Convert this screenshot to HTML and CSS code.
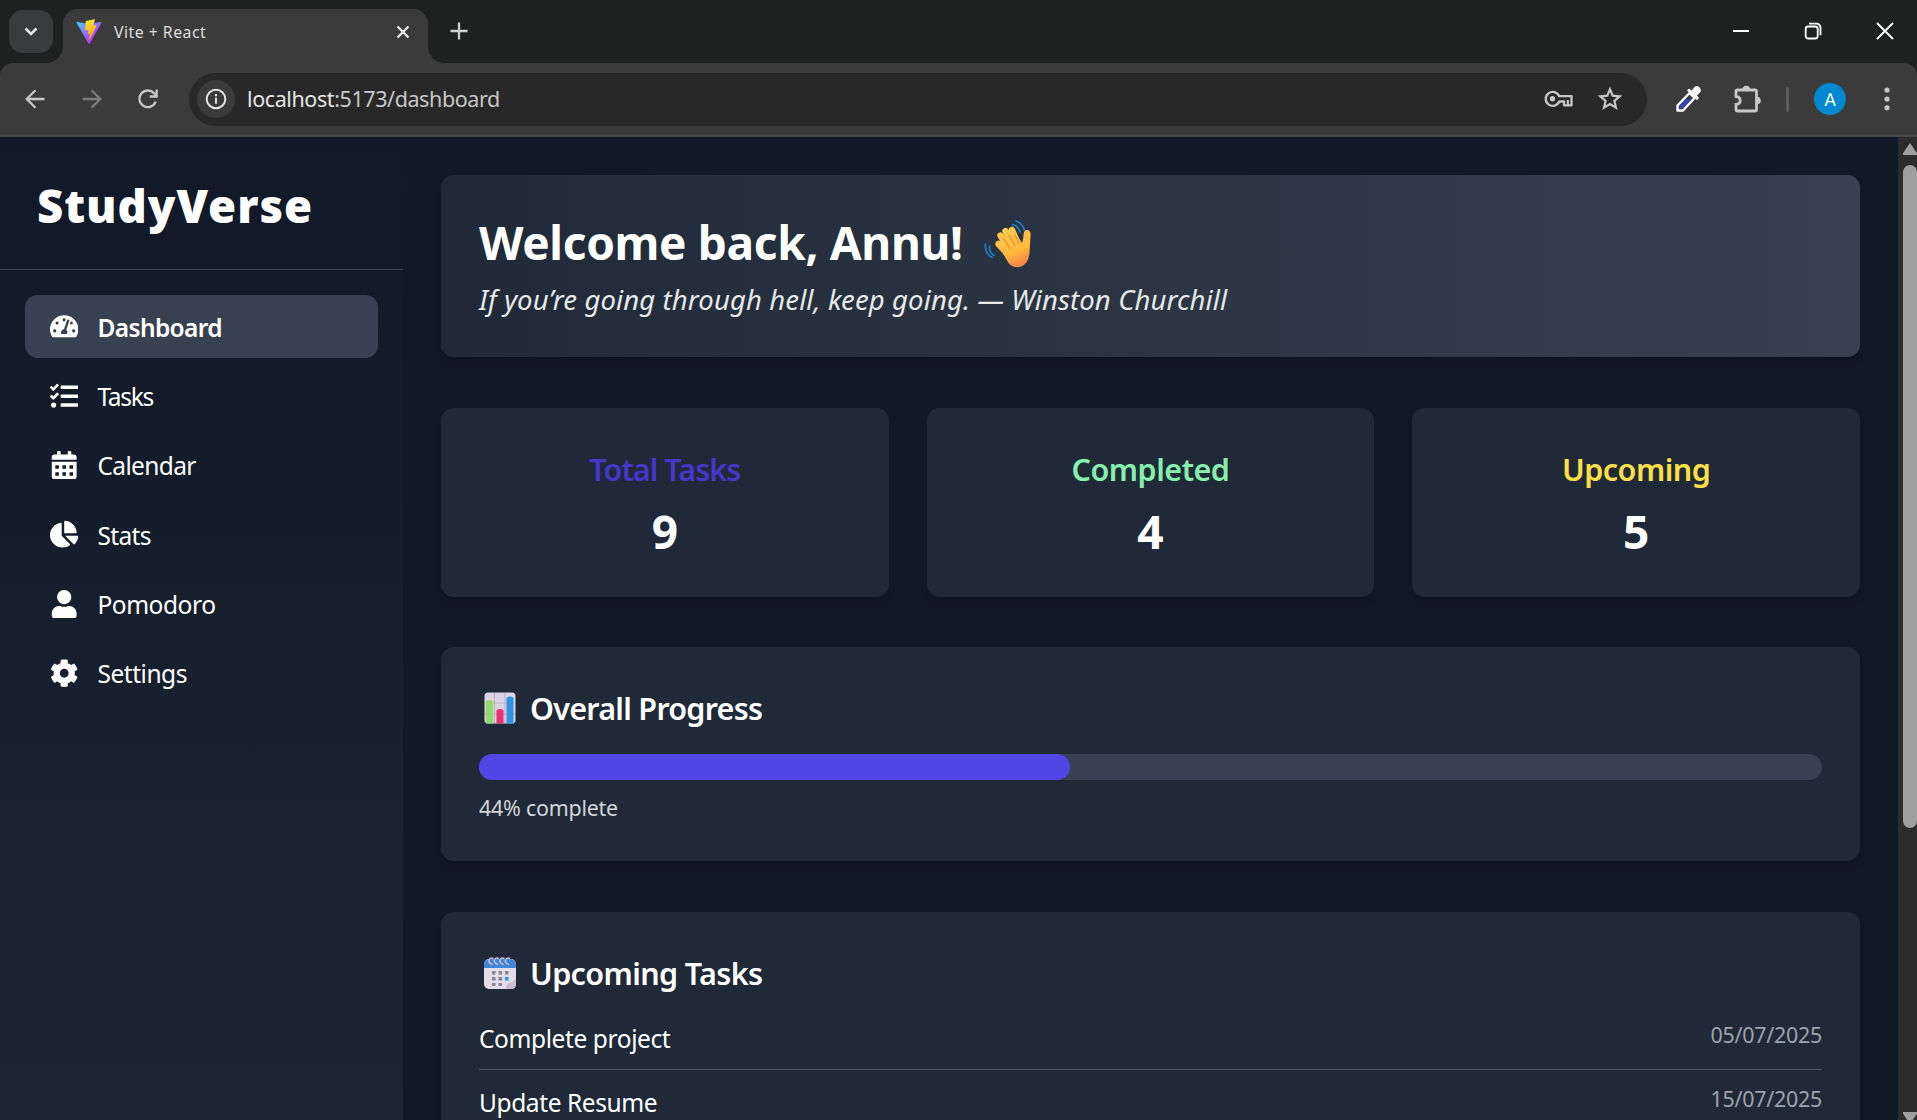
FILE: index.html
```html
<!DOCTYPE html>
<html lang="en">
<head>
<meta charset="utf-8">
<title>Vite + React</title>
<link rel="stylesheet" href="styles.css">
</head>
<body>
<div class="browser">
  <div class="tabstrip">
    <div class="tab-search"><svg width="14" height="10" viewBox="0 0 14 10"><path d="M1.5 1.5 7 7l5.500-5.500" fill="none" stroke="#e3e3e3" stroke-width="2.600"/></svg></div>
    <div class="tab">
      <svg class="favicon" width="26" height="26" viewBox="0 0 410 404">
        <defs>
          <linearGradient id="va" x1="6" y1="33" x2="235" y2="344" gradientUnits="userSpaceOnUse"><stop stop-color="#41d1ff"/><stop offset="1" stop-color="#bd34fe"/></linearGradient>
          <linearGradient id="vb" x1="194.600" y1="8.800" x2="236" y2="293" gradientUnits="userSpaceOnUse"><stop stop-color="#ffea83"/><stop offset=".083" stop-color="#ffdd35"/><stop offset="1" stop-color="#ffa800"/></linearGradient>
        </defs>
        <path fill="url(#va)" d="M399.641 59.5246L215.643 388.545C211.844 395.338 202.084 395.378 198.228 388.618L10.5817 59.5563C6.38087 52.1896 12.6802 43.2665 21.0281 44.7586L205.223 77.6824C206.398 77.8924 207.601 77.8904 208.776 77.6763L389.119 44.8058C397.439 43.2894 403.768 52.1434 399.641 59.5246Z"/>
        <path fill="url(#vb)" d="M292.965 1.5744L156.801 28.2552C154.563 28.6937 152.906 30.5903 152.771 32.8664L144.395 174.33C144.198 177.662 147.258 180.248 150.51 179.498L188.42 170.749C191.967 169.931 195.172 173.055 194.443 176.622L183.18 231.775C182.422 235.487 185.907 238.661 189.532 237.56L212.947 230.446C216.577 229.344 220.065 232.527 219.297 236.242L201.398 322.875C200.278 328.294 207.486 331.249 210.492 326.603L212.5 323.5L323.454 102.072C325.312 98.3645 322.108 94.137 318.036 94.9228L279.014 102.454C275.347 103.161 272.227 99.746 273.262 96.1583L298.731 7.86689C299.767 4.27314 296.636 0.855181 292.965 1.5744Z"/>
      </svg>
      <span class="tab-title">Vite + React</span>
      <svg class="tab-close" width="14" height="14" viewBox="0 0 14 14"><path d="M1.500 1.500l11 11M12.500 1.500l-11 11" stroke="#e8e8e8" stroke-width="2.300"/></svg>
    </div>
    <svg class="new-tab" width="18" height="18" viewBox="0 0 18 18"><path d="M9 .5v17M.5 9h17" stroke="#d0d0d0" stroke-width="2.300"/></svg>
    <div class="win-controls">
      <svg width="18" height="18" viewBox="0 0 18 18"><path d="M1 9h16" stroke="#fff" stroke-width="2"/></svg>
      <svg width="18" height="18" viewBox="0 0 18 18" fill="none" stroke="#fff" stroke-width="1.800"><rect x="1.700" y="4.500" width="12" height="12" rx="2.500"/><path d="M5 1.700h7.500a4 4 0 0 1 4 4v7.500"/></svg>
      <svg width="18" height="18" viewBox="0 0 18 18"><path d="M1 1l16 16M17 1L1 17" stroke="#fff" stroke-width="1.900"/></svg>
    </div>
  </div>
  <div class="toolbar">
    <svg class="nav-btn" width="20" height="20" viewBox="0 0 20 20" fill="none" stroke="#c7c7c7" stroke-width="2.300"><path d="M19.500 10H2M10.500 1.200 1.700 10l8.800 8.800"/></svg>
    <svg class="nav-btn" width="20" height="20" viewBox="0 0 20 20" fill="none" stroke="#7d7d7d" stroke-width="2.300"><path d="M.5 10H18M9.500 1.200 18.300 10l-8.800 8.800"/></svg>
    <svg class="nav-btn" width="20" height="20" viewBox="0 0 20 20" fill="none" stroke="#c7c7c7" stroke-width="2.300"><path d="M17.600 12.600A8.300 8.300 0 1 1 16 4.300l2 2.200M18.700.5v7h-7"/></svg>
    <div class="omnibox">
      <div class="site-info"><svg width="22" height="22" viewBox="0 0 22 22"><circle cx="11" cy="11" r="9.300" fill="none" stroke="#e3e3e3" stroke-width="2"/><path d="M11 9.800v6M11 6v2.200" stroke="#e3e3e3" stroke-width="2"/></svg></div>
      <span class="url"><b>localhost</b>:5173/dashboard</span>
      <svg class="key" width="30" height="18" viewBox="0 0 30 18" fill="none" stroke="#c7c7c7" stroke-width="2.300"><path d="M15.200 6.200A7 7 0 1 0 15.200 11.500H20v3.800h7.500V6.200z" stroke-linejoin="round"/><circle cx="8.500" cy="8.800" r="2.700" fill="#c7c7c7" stroke="none"/><path d="M23.800 10v5"/></svg>
      <svg class="star" width="26" height="26" viewBox="0 0 26 26" fill="none" stroke="#c7c7c7" stroke-width="2.200"><path d="M13 3.200l2.700 6.500 7 .6-5.300 4.600 1.600 6.900-6-3.700-6 3.700 1.600-6.900-5.300-4.600 7-.6z"/></svg>
    </div>
    <svg class="pipette" width="28" height="28" viewBox="0 0 28 28"><path d="M2.500 25.500v-5L14.500 8l5 5L8 25.500z" fill="#3b3b3b" stroke="#fff" stroke-width="2.400" stroke-linejoin="round"/><path d="M4.500 23.500v-2.500l6.500-6.800h5.500L7 23.500z" fill="#3346c8"/><path d="M12 5.500l2-2 2.500 2 3-3.500q2.500-2 5 .5t.5 5l-3 3 2 2.500-2 2.300z" fill="#fff"/></svg>
    <svg class="puzzle" width="28" height="28" viewBox="0 0 28 28"><path d="M4.500 5H22q1.500 0 1.500 1.500v18Q23.500 26 22 26H4.500Q3 26 3 24.500v-5q4.200-.5 4.200-4T3 11.500v-5Q3 5 4.500 5z" fill="none" stroke="#c7c7c7" stroke-width="2.800"/><path d="M9.500 4.500a3.800 3.800 0 0 1 7.600 0zM24 11.700a3.800 3.800 0 0 1 0 7.600z" fill="#c7c7c7"/></svg>
    <i class="divider"></i>
    <div class="avatar">A</div>
    <svg class="menu" width="6" height="24" viewBox="0 0 6 24" fill="#c7c7c7"><circle cx="3" cy="3" r="2.600"/><circle cx="3" cy="12" r="2.600"/><circle cx="3" cy="20.800" r="2.600"/></svg>
  </div>
</div>
<div class="page">
  <aside class="sidebar">
    <div class="brand">StudyVerse</div>
    <nav class="nav">
      <a class="nav-item active"><svg viewBox="0 0 576 512"><path d="M288 32C128.94 32 0 160.94 0 320c0 52.8 14.25 102.26 39.06 144.8 5.61 9.62 16.3 15.2 27.44 15.2h443c11.14 0 21.83-5.58 27.44-15.2C561.75 422.26 576 372.8 576 320c0-159.06-128.94-288-288-288zm0 64c14.71 0 26.58 10.13 30.32 23.65-1.11 2.26-2.64 4.23-3.45 6.67l-9.22 27.67c-5.13 3.49-10.97 6.01-17.64 6.01-17.67 0-32-14.33-32-32S270.33 96 288 96zM96 384c-17.67 0-32-14.33-32-32s14.33-32 32-32 32 14.33 32 32-14.33 32-32 32zm48-160c-17.67 0-32-14.33-32-32s14.33-32 32-32 32 14.33 32 32-14.33 32-32 32zm246.77-72.41l-61.33 184C343.13 347.33 352 364.54 352 384c0 11.72-3.38 22.55-8.88 32H232.88c-5.5-9.45-8.88-20.28-8.88-32 0-33.94 26.5-61.43 59.9-63.59l61.34-184.01c4.17-12.56 17.73-19.45 30.36-15.17 12.57 4.19 19.35 17.79 15.17 30.36zm14.66 57.2l15.52-46.55c3.47-1.29 7.13-2.23 11.05-2.23 17.67 0 32 14.33 32 32s-14.33 32-32 32c-11.38-.01-20.89-6.28-26.57-15.22zM480 384c-17.67 0-32-14.33-32-32s14.33-32 32-32 32 14.33 32 32-14.33 32-32 32z"/></svg><span class="label">Dashboard</span></a>
      <a class="nav-item nav-tasks"><svg viewBox="0 0 512 512"><path d="M139.61 35.5a12 12 0 0 0-17 0L58.93 98.81l-22.7-22.12a12 12 0 0 0-17 0L3.53 92.41a12 12 0 0 0 0 17l47.59 47.4a12.78 12.78 0 0 0 17.61 0l15.59-15.62L156.52 69a12.09 12.09 0 0 0 .09-17zm0 159.19a12 12 0 0 0-17 0l-63.68 63.72-22.7-22.1a12 12 0 0 0-17 0L3.53 252a12 12 0 0 0 0 17L51 316.5a12.77 12.77 0 0 0 17.6 0l15.7-15.69 72.2-72.22a12 12 0 0 0 .09-16.9zM64 368c-26.49 0-48.59 21.5-48.59 48S37.53 464 64 464a48 48 0 0 0 0-96zm432 16H208a16 16 0 0 0-16 16v32a16 16 0 0 0 16 16h288a16 16 0 0 0 16-16v-32a16 16 0 0 0-16-16zm0-320H208a16 16 0 0 0-16 16v32a16 16 0 0 0 16 16h288a16 16 0 0 0 16-16V80a16 16 0 0 0-16-16zm0 160H208a16 16 0 0 0-16 16v32a16 16 0 0 0 16 16h288a16 16 0 0 0 16-16v-32a16 16 0 0 0-16-16z"/></svg><span class="label">Tasks</span></a>
      <a class="nav-item"><svg viewBox="0 0 448 512"><path fill-rule="evenodd" d="M0 464c0 26.500 21.500 48 48 48h352c26.500 0 48-21.500 48-48V192H0zM64 256h64v64H64zM192 256h64v64h-64zM320 256h64v64h-64zM64 384h64v64H64zM192 384h64v64h-64zM320 384h64v64h-64zM400 64h-48V16c0-8.800-7.200-16-16-16h-32c-8.800 0-16 7.200-16 16v48H160V16c0-8.800-7.200-16-16-16h-32c-8.800 0-16 7.200-16 16v48H48C21.500 64 0 85.500 0 112v48h448v-48c0-26.500-21.500-48-48-48z"/></svg><span class="label">Calendar</span></a>
      <a class="nav-item"><svg viewBox="0 0 544 512"><path d="M527.79 288H290.5l158.03 158.03c6.04 6.04 15.98 6.53 22.19.68 38.7-36.46 65.32-85.61 73.13-140.86 1.34-9.46-6.51-17.85-16.06-17.85zm-15.83-64.8C503.72 103.74 408.26 8.28 288.8.04 279.68-.59 272 7.1 272 16.24V240h223.77c9.14 0 16.82-7.68 16.19-16.8zM224 288V50.71c0-9.55-8.39-17.4-17.84-16.06C86.99 51.49-4.1 155.6.14 280.37 4.5 408.51 114.83 513.59 243.03 511.98c50.4-.63 96.97-16.87 135.26-44.03 7.9-5.6 8.42-17.23 1.57-24.08L224 288z"/></svg><span class="label">Stats</span></a>
      <a class="nav-item nav-wide"><svg viewBox="0 0 448 512"><path d="M224 256c70.7 0 128-57.3 128-128S294.7 0 224 0 96 57.3 96 128s57.3 128 128 128zm89.6 32h-16.7c-22.2 10.2-46.9 16-72.9 16s-50.6-5.8-72.9-16h-16.7C60.2 288 0 348.2 0 422.4V464c0 26.5 21.5 48 48 48h352c26.5 0 48-21.5 48-48v-41.6c0-74.2-60.2-134.4-134.4-134.4z"/></svg><span class="label">Pomodoro</span></a>
      <a class="nav-item nav-wide"><svg viewBox="0 0 512 512"><path d="M487.4 315.7l-42.6-24.6c4.3-23.2 4.3-47 0-70.2l42.6-24.6c4.9-2.8 7.1-8.6 5.5-14-11.1-35.6-30-67.8-54.7-94.6-3.8-4.1-10-5.1-14.8-2.3L380.8 110c-17.9-15.4-38.5-27.3-60.8-35.1V25.8c0-5.6-3.9-10.5-9.4-11.7-36.7-8.2-74.3-7.8-109.2 0-5.5 1.2-9.4 6.1-9.4 11.7V75c-22.2 7.9-42.8 19.8-60.8 35.1L88.7 85.5c-4.9-2.8-11-1.9-14.8 2.3-24.7 26.7-43.6 58.9-54.7 94.6-1.7 5.4.6 11.2 5.5 14L67.3 221c-4.3 23.2-4.3 47 0 70.2l-42.6 24.6c-4.9 2.8-7.1 8.6-5.5 14 11.1 35.6 30 67.8 54.7 94.6 3.8 4.1 10 5.1 14.8 2.3l42.6-24.6c17.9 15.4 38.5 27.3 60.8 35.1v49.2c0 5.6 3.9 10.5 9.4 11.7 36.7 8.2 74.3 7.8 109.2 0 5.5-1.2 9.4-6.1 9.4-11.7v-49.2c22.2-7.9 42.8-19.8 60.8-35.1l42.6 24.6c4.9 2.8 11 1.9 14.8-2.3 24.7-26.7 43.6-58.9 54.7-94.6 1.5-5.5-.7-11.3-5.6-14.1zM256 336c-44.1 0-80-35.9-80-80s35.9-80 80-80 80 35.9 80 80-35.9 80-80 80z"/></svg><span class="label">Settings</span></a>
    </nav>
  </aside>
  <main class="main">
    <section class="hero">
      <h1>Welcome back, Annu!
        <svg class="wave" width="50" height="48" viewBox="0 0 50 48">
          <defs><linearGradient id="sk" x1="0" y1="0" x2=".4" y2="1"><stop stop-color="#ffce4f"/><stop offset=".7" stop-color="#ffb83c"/><stop offset="1" stop-color="#f98a4b"/></linearGradient></defs>
          <g fill="none" stroke="#1d84cf" stroke-width="1.600" stroke-linecap="round"><path d="M28.500 4.500q5.500 1 7.500 7.500M32 1q7 2.500 8.500 9.500M5.500 26q-.5 6.500 4.500 9.500M1.500 24q-1 9 6.500 13.500"/></g>
          <g stroke="url(#sk)" stroke-width="6.400" stroke-linecap="round"><path d="M16.500 15.500l9 14M21.500 11l9 16M28 10l7 16M14.500 24l9 10"/></g>
          <path d="M13 23l19-9 6 9q1.500-4 1.700-9.500 1-4.300 4.500-3.300 3 1 2.300 6L45.500 33q-1 12.500-11 14.200-5.500.8-10-4.200z" fill="url(#sk)"/>
          <path d="M19.500 19l6.500 9.500M24.800 15.500l6.200 10M31 15l4 8" stroke="#e88a2c" stroke-width="1.200" fill="none" stroke-linecap="round"/>
        </svg></h1>
      <p>If you’re going through hell, keep going. — Winston Churchill</p>
    </section>
    <section class="stats">
      <div class="stat"><h2 class="indigo">Total Tasks</h2><strong>9</strong></div>
      <div class="stat"><h2 class="green">Completed</h2><strong>4</strong></div>
      <div class="stat"><h2 class="yellow">Upcoming</h2><strong>5</strong></div>
    </section>
    <section class="card">
      <h3><svg class="emoji" width="32" height="32" viewBox="0 0 32 32"><rect x=".5" y=".5" width="31" height="31" rx="3.500" fill="#dcd4e3"/><path d="M10.500 1v30M21 1v30M1 11h30M1 22h30" stroke="#b9afc4" stroke-width="1"/><path d="M2 31.500V10q0-2 3.500-2T9 10v21.500z" fill="#8fdc6c"/><path d="M12.500 31.500V19q0-2 3.500-2t3.500 2v12.500z" fill="#ea2f72"/><path d="M22.500 31.500V6.500q0-2 3.500-2t3.500 2v25z" fill="#2f93e6"/></svg>Overall Progress</h3>
      <div class="bar"><div class="fill" style="width:44%"></div></div>
      <p class="pct">44% complete</p>
    </section>
    <section class="card tasks">
      <h3><svg class="emoji" width="32" height="32" viewBox="0 0 32 32"><rect y="2" width="32" height="30" rx="5" fill="#e3dcea"/><path d="M0 11V8q0-6 6-6h20q6 0 6 6v3z" fill="#3f86d8"/><path d="M23 32q-2-2 1-6 4 0 8-4.500V27q0 5-5 5z" fill="#c9bdd4"/><g fill="#8c8496"><path d="M8 14h3.500v3.500H8zM14.500 14H18v3.500h-3.500zM21 14h3.500v3.500H21zM8 20h3.500v3.500H8zM14.500 20H18v3.500h-3.500zM8 26h3.500v3H8zM14.500 26H18v3h-3.500z"/></g><path d="M21 20h3.500v3.500H21z" fill="#2f93e6"/><path d="M8.500 7.500Q4 6 5 3t4.500-1.500M14 7.500Q9.500 6 10.500 3T15 1.500M19.500 7.500Q15 6 16 3t4.500-1.500M25 7.500q-4.500-1.500-3.500-4.500T26 1.500" fill="none" stroke="#cfc6dc" stroke-width="1.400"/></svg>Upcoming Tasks</h3>
      <ul>
        <li><span class="name">Complete project</span><time>05/07/2025</time></li>
        <li><span class="name">Update Resume</span><time>15/07/2025</time></li>
      </ul>
    </section>
  </main>
  <div class="scrollbar"><i class="up"></i><div class="thumb"></div><i class="down"></i></div>
</div>
</body>
</html>
```
FILE: styles.css
```css
* { box-sizing: border-box; margin: 0; padding: 0; }
html, body { height: 100%; overflow: hidden; }
body {
  display: flex;
  flex-direction: column;
  background: #111827;
  color: #fff;
  font-family: "Noto Sans", "Open Sans", sans-serif;
}
svg { display: block; flex: none; }

/* browser chrome */
.browser { flex: none; height: 137px; background: #1f2120; }
.tabstrip { display: flex; height: 63px; padding-left: 9px; align-items: flex-start; }
.tab-search {
  width: 44px; height: 43px; margin-top: 10px;
  border-radius: 14px; background: #3a3b3d;
  display: flex; align-items: center; justify-content: center;
}
.tab {
  position: relative;
  width: 365px; height: 54px; margin: 9px 0 0 10px; padding: 0 18px 9px 13px;
  border-radius: 15px 15px 0 0; background: #3b3b3b;
  display: flex; align-items: center;
}
.tab::before, .tab::after {
  content: ""; position: absolute; bottom: 0; width: 16px; height: 16px;
}
.tab::before { left: -16px; background: radial-gradient(circle at 0 0, transparent 15.500px, #3b3b3b 16px); }
.tab::after { right: -16px; background: radial-gradient(circle at 100% 0, transparent 15.500px, #3b3b3b 16px); }
.tab-title { flex: 1; margin-left: 12px; font-size: 15.800px; line-height: 20px; letter-spacing: .49px; color: #dedede; white-space: nowrap; }
.new-tab { margin: 22px 0 0 22px; }
.win-controls { margin: 22px 23px 0 auto; display: flex; gap: 54px; }
.toolbar {
  display: flex; align-items: center; height: 74px; padding: 0 27px 0 25px;
  background: #3b3b3b; border-bottom: 2px solid #484848;
  border-radius: 13px 13px 0 0;
}
.nav-btn { margin-right: 36.500px; }
.omnibox {
  width: 1458px; height: 53px; margin-left: -5.500px; padding: 0 24px 0 8px;
  border-radius: 27px; background: #282828;
  display: flex; align-items: center;
}
.site-info {
  width: 38px; height: 38px; border-radius: 50%; background: #3b3b3b;
  display: flex; align-items: center; justify-content: center;
}
.url { flex: 1; margin-left: 12px; font-size: 21.500px; line-height: 30px; letter-spacing: -.41px; color: #c7c7c7; white-space: nowrap; }
.url b { font-weight: 400; color: #e6e6e6; }
.star { margin-left: 23px; }
.pipette { margin-left: 28px; }
.puzzle { margin-left: 30px; }
.divider { width: 3px; height: 25px; margin-left: 25px; border-radius: 2px; background: #5c5c5c; }
.avatar {
  width: 32px; height: 32px; margin-left: 25px; border-radius: 50%;
  background: #0288d1; font: 18px/33px Roboto, sans-serif; text-align: center;
}
.menu { margin-left: 38px; }

/* app */
.page { flex: 1; display: flex; min-height: 0; overflow: hidden; }
.sidebar { width: 403px; flex: none; background: linear-gradient(#111827, #1c2634); }
.brand {
  height: 133px; padding: 3px 37px 0; border-bottom: 1px solid #374151;
  display: flex; align-items: center;
  font-size: 45.500px; font-weight: 900; letter-spacing: .96px; white-space: nowrap;
}
.nav { display: flex; flex-direction: column; gap: 6.400px; padding: 25px; }
.nav-item {
  height: 63px; padding: 0 25px; border-radius: 12.600px;
  display: flex; align-items: center; gap: 19px;
  font-size: 24.500px; line-height: 38px; letter-spacing: -.62px; white-space: nowrap;
}
.nav-item svg { width: 28.400px; height: 28.400px; fill: #fff; }
.nav-item .label { padding-top: 2px; }
.nav-item.active { background: #374151; font-weight: 600; }
.nav-tasks { letter-spacing: -1.250px; }
.nav-wide { letter-spacing: -.45px; }
.main { flex: 1; min-width: 0; padding: 38px; display: flex; flex-direction: column; }
.hero, .stat, .card { flex: none; border-radius: 12.600px; box-shadow: 0 6px 9px -2px rgba(0, 0, 0, .2); }
.hero { height: 182px; padding: 39px 38px 37px; background: linear-gradient(90deg, #1f2937, #374151); }
.hero h1 { display: flex; height: 57px; font-size: 46px; line-height: 57px; font-weight: 700; letter-spacing: -.33px; white-space: nowrap; }
.wave { margin: 6px 0 0 21px; }
.hero p { margin-top: 9px; font-size: 27.500px; line-height: 40px; letter-spacing: .11px; font-style: italic; color: #e7e9eb; white-space: nowrap; }
.stats { display: grid; grid-template-columns: repeat(3, 1fr); gap: 38px; margin-top: 51px; }
.stat { height: 189px; padding: 38px; background: #1f2937; text-align: center; }
.stat h2 { font-size: 30.500px; line-height: 46px; font-weight: 600; }
.stat strong { display: block; margin-top: 11px; font-size: 46px; line-height: 56px; font-weight: 700; }
.stat .indigo { color: #4338ca; letter-spacing: -.95px; }
.stat .green { color: #86efac; letter-spacing: -.5px; }
.stat .yellow { color: #fde047; letter-spacing: -.5px; }
.card { margin-top: 50px; height: 214px; padding: 38px; background: #1f2937; }
.card h3 { display: flex; align-items: center; font-size: 30.500px; line-height: 46px; font-weight: 600; letter-spacing: -.73px; white-space: nowrap; }
.emoji { margin: 0 14px 0 5px; }
.bar { height: 26px; margin-top: 23px; border-radius: 13px; background: #374151; }
.fill { height: 100%; border-radius: 13px; background: #4f46e5; }
.pct { margin-top: 12px; font-size: 21.400px; line-height: 31.500px; letter-spacing: -.22px; color: #d1d5db; }
.tasks { height: 300px; margin-top: 51px; }
.tasks h3 { letter-spacing: -.63px; }
.tasks ul { margin-top: 10px; list-style: none; }
.tasks li {
  display: flex; justify-content: space-between; height: 64px; padding-top: 12.600px;
  border-bottom: 1px solid #4b5563; font-size: 24.500px; line-height: 38px; letter-spacing: -.4px;
}
.tasks .name { padding-top: 1px; }
.tasks time { font-size: 21.400px; line-height: 31.500px; letter-spacing: -.22px; color: #9ca3af; }

.scrollbar {
  flex: none; width: 19px; padding: 6px 0 0 5px; background: #2c2c2c;
  display: flex; flex-direction: column; overflow: hidden;
}
.scrollbar i { flex: none; width: 14px; height: 12px; background: #9f9f9f; clip-path: polygon(50% 0, 100% 85%, 100% 100%, 0 100%, 0 85%); }
.thumb { flex: none; height: 663px; margin-top: 10px; border-radius: 7px; background: #9f9f9f; }
.scrollbar .down { margin-top: 284px; transform: scaleY(-1); }
```
